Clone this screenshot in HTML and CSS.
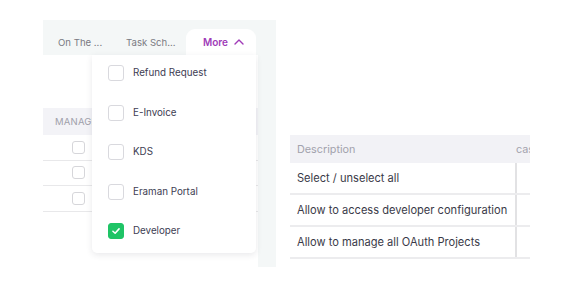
FILE: index.html
```html
<!DOCTYPE html>
<html lang="en">
<head>
  <meta charset="UTF-8"/>
  <title>Roles - Permissions</title>
  <link rel="stylesheet" href="styles.css">
</head>
<body>
  <div class="page">
    <section class="panel">
      <div class="tabs">
        <span class="tab tab-first">On The ...</span>
        <span class="tab tab-second">Task Sch...</span>
        <span class="tab tab-more">More
          <svg class="chev" viewBox="0 0 10 6"><path d="M1 5 L5 1 L9 5" fill="none" stroke="currentColor" stroke-width="1.4" stroke-linecap="round" stroke-linejoin="round"/></svg>
        </span>
      </div>
      <div class="panel-body">
        <div class="mini-table">
          <div class="mini-head">MANAGE</div>
          <div class="mini-row"><span class="box"></span></div>
          <div class="mini-row"><span class="box"></span></div>
          <div class="mini-row"><span class="box"></span></div>
        </div>
      </div>
      <div class="panel-edge"></div>

      <ul class="dropdown">
        <li><span class="cb"></span>Refund Request</li>
        <li><span class="cb"></span>E-Invoice</li>
        <li><span class="cb"></span>KDS</li>
        <li><span class="cb"></span>Eraman Portal</li>
        <li><span class="cb checked"><svg viewBox="0 0 16 16"><path d="M4.5 8.3 L7 10.6 L11.5 5.6" fill="none" stroke="#fff" stroke-width="1.8" stroke-linecap="round" stroke-linejoin="round"/></svg></span>Developer</li>
      </ul>
    </section>

    <section class="perm-table">
      <div class="perm-row perm-head"><div class="c-desc">Description</div><div class="c-case">case</div></div>
      <div class="perm-row"><div class="c-desc">Select / unselect all</div><div class="c-case"></div></div>
      <div class="perm-row"><div class="c-desc">Allow to access developer configuration</div><div class="c-case"></div></div>
      <div class="perm-row"><div class="c-desc">Allow to manage all OAuth Projects</div><div class="c-case"></div></div>
    </section>
  </div>
</body>
</html>
```

FILE: styles.css
```css
/* ===== Global ===== */
* { margin:0; padding:0; box-sizing:border-box; }
body { font-family:'Inter','Noto Sans',sans-serif; background:#fff; color:#3b3b4a; }
.page { display:flex; align-items:flex-start; padding:20px 0 0 43px; }

/* ===== Left panel ===== */
.panel { position:relative; width:233px; height:247px; background:#f4f7f7; display:flex; flex-direction:column; flex-shrink:0; }
.tabs { height:35px; display:flex; align-items:flex-end; font-size:9.6px; color:#7a7a82; }
.tab { display:flex; align-items:center; height:26px; }
.tab-first { margin-left:15px; width:68px; }
.tab-second { width:60px; }
.tab-more { width:70px; background:#fff; border-radius:9px 9px 0 0; padding-left:17px; color:#a03bb8; font-weight:600; font-size:10px; gap:6px; }
.chev { width:10px; height:6px; }
.panel-body { width:215px; flex:1; background:#fff; padding-top:53px; }
.panel-edge { position:absolute; right:0; top:35px; width:18px; bottom:0; background:#f4f7f7; }

.mini-head { height:27px; background:#f3f3f7; color:#a0a0aa; font-size:9.5px; display:flex; align-items:center; padding-left:12px; letter-spacing:.2px; }
.mini-row { height:25.5px; border-bottom:1.5px solid #e8e8ea; display:flex; align-items:center; padding-left:29px; }
.box { width:13px; height:13px; border:1px solid #d6d6da; border-radius:3px; background:#fff; }

/* ===== Dropdown ===== */
.dropdown { position:absolute; left:49px; top:35px; width:164px; height:198px; background:#fff; list-style:none; border-radius:0 0 5px 5px; box-shadow:0 2px 6px rgba(40,40,60,0.10); }
.dropdown li { height:39.5px; display:flex; align-items:flex-start; padding:10px 0 0 16px; gap:9px; font-size:9.8px; color:#3d3d52; line-height:16px; }
.cb { width:16px; height:16px; border:1px solid #d9d9de; border-radius:3px; flex-shrink:0; }
.cb.checked { background:#1fc466; border-color:#1fc466; }
.cb svg { width:14px; height:14px; display:block; }

/* ===== Permissions table ===== */
.perm-table { margin:115px 0 0 14px; width:240px; overflow:hidden; flex-shrink:0; }
.perm-row { display:flex; width:300px; height:32px; border-bottom:2px solid #ececee; font-size:11.1px; color:#3a3a48; }
.perm-row .c-desc { width:225px; flex-shrink:0; padding-left:7px; display:flex; align-items:center; white-space:nowrap; }
.perm-row .c-case { width:60px; flex-shrink:0; border-left:2px solid #e2e2e4; display:flex; align-items:center; }
.perm-head { height:28px; border-bottom:none; background:#f2f2f6; color:#a2a2ad; font-size:10.8px; }
.perm-head .c-case { border-left:none; padding-left:1px; }
```
